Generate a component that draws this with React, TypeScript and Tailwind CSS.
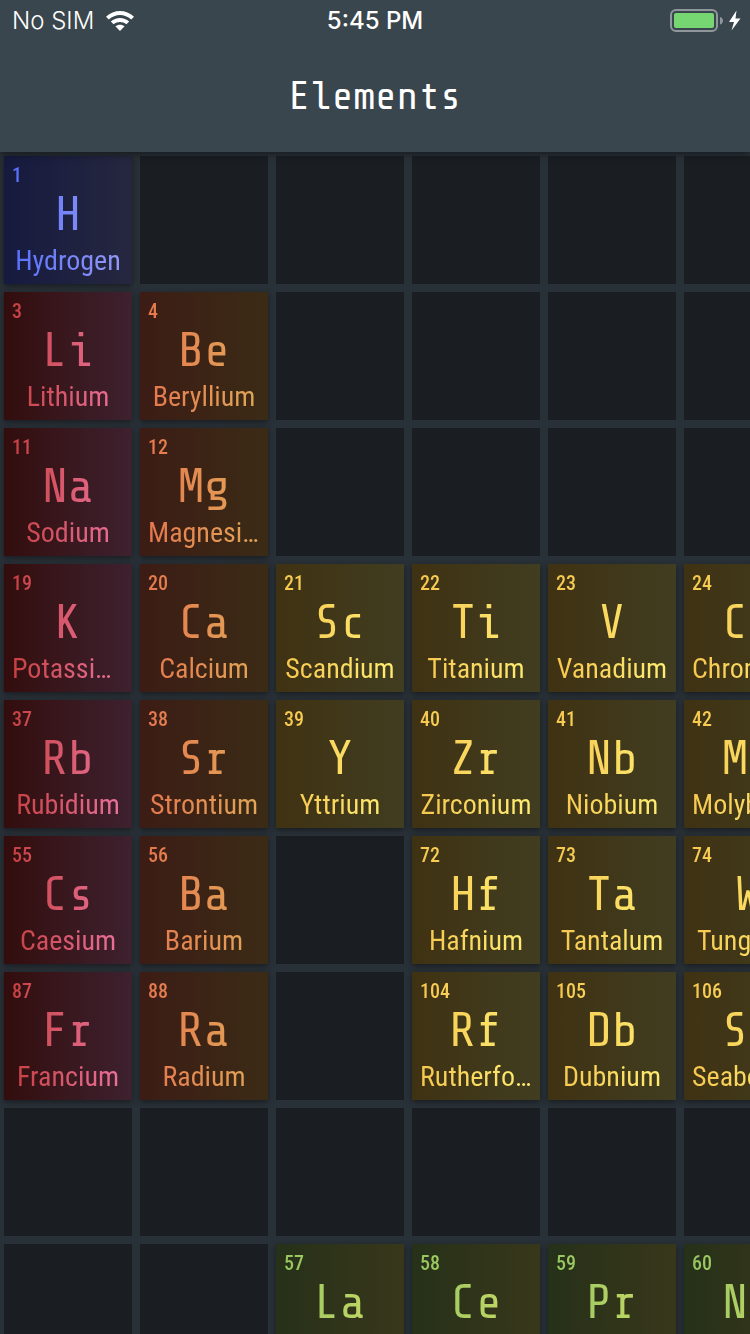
import clsx from 'clsx';

type Group = 'nonmetal' | 'alkali' | 'alkaline' | 'transition' | 'lanthanide';
type Element = { number: number; symbol: string; name: string; group: Group };

const tileStyle: Record<Group, string> = {
  nonmetal: 'from-[#161a3f] to-[#26273f]',
  alkali: 'from-[#330d0d] to-[#3e212f]',
  alkaline: 'from-[#3c1c15] to-[#3b2b15]',
  transition: 'from-[#3f3212] to-[#413d20]',
  lanthanide: 'from-[#263119] to-[#38371a]',
};

const textStyle: Record<Group, string> = {
  nonmetal: 'from-[#536dfe] to-[#9a9bf4]',
  alkali: 'from-[#c43c3a] to-[#ee76a4]',
  alkaline: 'from-[#e5734d] to-[#e0ab58]',
  transition: 'from-[#f5c44c] to-[#fff176]',
  lanthanide: 'from-[#8fc45f] to-[#d4de67]',
};

const el = (number: number, symbol: string, name: string, group: Group): Element => ({
  number,
  symbol,
  name,
  group,
});

const rows: (Element | null)[][] = [
  [el(1, 'H', 'Hydrogen', 'nonmetal'), null, null, null, null, null],
  [el(3, 'Li', 'Lithium', 'alkali'), el(4, 'Be', 'Beryllium', 'alkaline'), null, null, null, null],
  [el(11, 'Na', 'Sodium', 'alkali'), el(12, 'Mg', 'Magnesium', 'alkaline'), null, null, null, null],
  [
    el(19, 'K', 'Potassium', 'alkali'),
    el(20, 'Ca', 'Calcium', 'alkaline'),
    el(21, 'Sc', 'Scandium', 'transition'),
    el(22, 'Ti', 'Titanium', 'transition'),
    el(23, 'V', 'Vanadium', 'transition'),
    el(24, 'Cr', 'Chromium', 'transition'),
  ],
  [
    el(37, 'Rb', 'Rubidium', 'alkali'),
    el(38, 'Sr', 'Strontium', 'alkaline'),
    el(39, 'Y', 'Yttrium', 'transition'),
    el(40, 'Zr', 'Zirconium', 'transition'),
    el(41, 'Nb', 'Niobium', 'transition'),
    el(42, 'Mo', 'Molybdenum', 'transition'),
  ],
  [
    el(55, 'Cs', 'Caesium', 'alkali'),
    el(56, 'Ba', 'Barium', 'alkaline'),
    null,
    el(72, 'Hf', 'Hafnium', 'transition'),
    el(73, 'Ta', 'Tantalum', 'transition'),
    el(74, 'W', 'Tungsten', 'transition'),
  ],
  [
    el(87, 'Fr', 'Francium', 'alkali'),
    el(88, 'Ra', 'Radium', 'alkaline'),
    null,
    el(104, 'Rf', 'Rutherfordium', 'transition'),
    el(105, 'Db', 'Dubnium', 'transition'),
    el(106, 'Sg', 'Seaborgium', 'transition'),
  ],
  [null, null, null, null, null, null],
  [
    null,
    null,
    el(57, 'La', 'Lanthanum', 'lanthanide'),
    el(58, 'Ce', 'Cerium', 'lanthanide'),
    el(59, 'Pr', 'Praseodymium', 'lanthanide'),
    el(60, 'Nd', 'Neodymium', 'lanthanide'),
  ],
];

function Tile({ element }: { element: Element | null }) {
  if (!element) return <div className="size-32 shrink-0 bg-[#1a1e22]" />;
  return (
    <button
      type="button"
      className={clsx(
        'size-32 shrink-0 cursor-pointer bg-linear-to-r shadow-[0_2px_6px_rgba(0,0,0,0.45)]',
        tileStyle[element.group],
      )}
    >
      <span
        className={clsx(
          'flex size-full flex-col justify-center bg-linear-to-r bg-clip-text px-2 text-transparent',
          textStyle[element.group],
        )}
      >
        <span className="text-left text-xl leading-6 font-medium">{element.number}</span>
        <span className="text-center font-['Share_Tech_Mono',monospace] text-5xl leading-[57px]">
          {element.symbol}
        </span>
        <span className="truncate text-center text-[28px] leading-[33px]">{element.name}</span>
      </span>
    </button>
  );
}

function WifiIcon() {
  return (
    <svg viewBox="0 0 28 20" className="h-5 w-7" fill="#fff" aria-hidden="true">
      <path d="M0 5.800C8-1.900 20-1.900 28 5.800L25.200 8.600C18.600 2.600 9.400 2.600 2.800 8.600Z" />
      <path d="M4.800 10.500C10 5.700 18 5.700 23.200 10.500L20.400 13.300C16.500 10.100 11.500 10.100 7.600 13.300Z" />
      <path d="M9.400 15.200C12 13.100 16 13.100 18.600 15.200L14 20Z" />
    </svg>
  );
}

function BatteryIcon() {
  return (
    <svg viewBox="0 0 72 24" className="h-6 w-[72px]" aria-hidden="true">
      <rect x="1" y="1" width="46" height="21" rx="5" fill="none" stroke="#8f979c" strokeWidth="2" />
      <rect x="4" y="4" width="40" height="15" rx="2" fill="#76d672" />
      <path d="M50 8c4 1 4 6.500 0 7.500z" fill="#8f979c" />
      <path d="M66.500 1.500 59 13h5l-2.500 8.500L70.500 9.500h-5z" fill="#fff" />
    </svg>
  );
}

export default function App() {
  return (
    <div className="flex h-screen flex-col overflow-hidden bg-[#293138] font-['Roboto_Condensed',sans-serif]">
      <header className="z-10 shrink-0 bg-[#3a464d] text-white shadow-[0_2px_8px_rgba(0,0,0,0.5)]">
        <div className="grid h-[42px] grid-cols-3 items-center px-3 font-['Inter',sans-serif] text-2xl">
          <div className="flex items-center gap-3">
            <span className="font-light">No SIM</span>
            <WifiIcon />
          </div>
          <span className="text-center font-medium">5:45 PM</span>
          <div className="-mr-1 flex justify-end">
            <BatteryIcon />
          </div>
        </div>
        <h1 className="flex h-[110px] items-center justify-center font-['Share_Tech_Mono',monospace] text-[40px]">
          Elements
        </h1>
      </header>
      <main className="flex min-h-0 flex-1 flex-col gap-2 overflow-auto p-1 [scrollbar-width:none]">
        {rows.map((row, i) => (
          <div key={i} className="flex w-max gap-2">
            {row.map((element, j) => (
              <Tile key={j} element={element} />
            ))}
          </div>
        ))}
      </main>
    </div>
  );
}
